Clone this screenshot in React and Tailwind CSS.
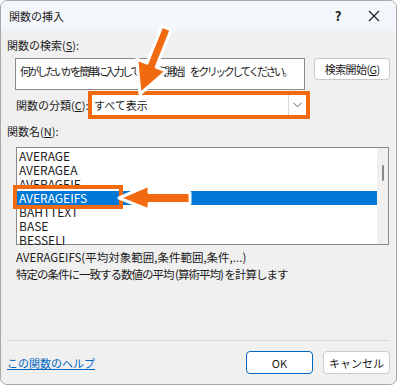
import React from 'react';

const items = ['AVERAGE', 'AVERAGEA', 'AVERAGEIF', 'AVERAGEIFS', 'BAHTTEXT', 'BASE', 'BESSELI'];

function Mnemonic({ label, k }) {
  return (
    <span className="whitespace-nowrap">
      {label}(<span className="underline">{k}</span>):
    </span>
  );
}

function Arrows() {
  return (
    <svg className="absolute inset-0 pointer-events-none" width="400" height="387" viewBox="0 0 400 387">
      {/* down arrow to category select */}
      <polygon
        points="160.9,25.1 170.1,28.9 155.2,66 165.4,70.1 139,93 135.8,58.1 146,62.2"
        fill="#f26a10"
        stroke="#ffffff"
        strokeWidth="3"
        strokeLinejoin="round"
      />
      {/* left arrow to AVERAGEIFS */}
      <polygon
        points="118,197 148,184 148,191.5 189,191.5 189,202.5 148,202.5 148,209"
        fill="#f26a10"
        stroke="#ffffff"
        strokeWidth="3"
        strokeLinejoin="round"
      />
    </svg>
  );
}

export default function App() {
  return (
    <div className="w-[400px] h-[387px] bg-white font-['Noto_Sans_CJK_JP',sans-serif] text-[11px] text-[#1a1a1a] leading-[16px]">
      <div className="relative w-[397px] h-[385px] rounded-[7px] border border-[#a8a8a8] bg-[#f0f0f0] overflow-hidden">
        {/* Title bar */}
        <div className="h-[30px] bg-[#f3f6fb] flex items-center pl-[8px]">
          <span className="flex-1">関数の挿入</span>
          <span className="w-[20px] text-center font-semibold text-[13px]">?</span>
          <span className="ml-[18px] mr-[14px] w-[16px] flex justify-center">
            <svg width="12" height="12" viewBox="0 0 12 12">
              <path d="M1 1 L11 11 M11 1 L1 11" stroke="#1a1a1a" strokeWidth="1.1" />
            </svg>
          </span>
        </div>

        <div className="px-[6px]">
          <div className="mt-[6px]">
            <Mnemonic label="関数の検索" k="S" />
          </div>

          <div className="mt-[5px] flex items-start">
            <div className="ml-[8px] w-[292px] h-[32px] bg-white border border-[#8a8a8a] pl-[4px] pt-[4px] whitespace-nowrap overflow-hidden tracking-[-2.5px]">
              何がしたいかを簡単に入力して［検索開始］ をクリックしてください。
            </div>
            <button className="ml-[9px] w-[76px] h-[22px] bg-white border border-[#c8c8c8] rounded-[4px] flex items-center justify-center whitespace-nowrap tracking-[-0.6px]">
              検索開始(<span className="underline">G</span>)
            </button>
          </div>

          <div className="mt-[1px] flex items-center">
            <span className="ml-[9px] w-[72px]">
              <Mnemonic label="関数の分類" k="C" />
            </span>
            <div className="border-[4px] border-[#f26a10] w-[222px] h-[28px] bg-white flex items-center">
              <span className="flex-1 pl-[2px]">すべて表示</span>
              <span className="w-[18px] h-full border-l border-[#d8d8d8] flex items-center justify-center">
                <svg width="9" height="6" viewBox="0 0 9 6">
                  <path d="M0.5 0.8 L4.5 4.8 L8.5 0.8" fill="none" stroke="#606060" strokeWidth="1" />
                </svg>
              </span>
            </div>
          </div>

          <div className="mt-[4px]">
            <Mnemonic label="関数名" k="N" />
          </div>

          <div className="relative mt-[8px] ml-[9px] w-[373px] h-[98px] bg-white border border-[#8a8a8a] flex text-[12px]">
            <div className="flex-1 pt-[1px]">
              {items.map((name, i) => (
                <div
                  key={name}
                  className={
                    i === 3
                      ? 'h-[14px] leading-[14px] pl-[2px] bg-[#0078d7] text-white'
                      : 'h-[14px] leading-[14px] pl-[2px]'
                  }
                >
                  {name}
                </div>
              ))}
            </div>
            <div className="w-[11px] bg-[#f0f0f0] flex justify-center">
              <div className="mt-[17px] w-[2px] h-[16px] bg-[#8a8a8a] rounded-full" />
            </div>
            <div className="absolute left-[-4px] top-[37px] w-[110px] h-[24px] border-[4px] border-[#f26a10]" />
          </div>

          <div className="mt-[4px] ml-[9px] text-[11.5px]">
            <div>AVERAGEIFS(平均対象範囲,条件範囲,条件,...)</div>
            <div className="mt-[1px] tracking-[-1px]">特定の条件に一致する数値の平均 (算術平均) を計算します</div>
          </div>

          <div className="mt-[58px] h-px bg-[#d8d8d8]" />

          <div className="mt-[10px] flex items-center">
            <a className="flex-1 text-[#0067c0] underline">この関数のヘルプ</a>
            <button className="w-[67px] h-[23px] bg-white border border-[#0067c0] rounded-[4px]">OK</button>
            <button className="ml-[10px] w-[67px] h-[23px] bg-white border border-[#cccccc] rounded-[4px]">キャンセル</button>
          </div>
        </div>

        <Arrows />
      </div>
    </div>
  );
}
